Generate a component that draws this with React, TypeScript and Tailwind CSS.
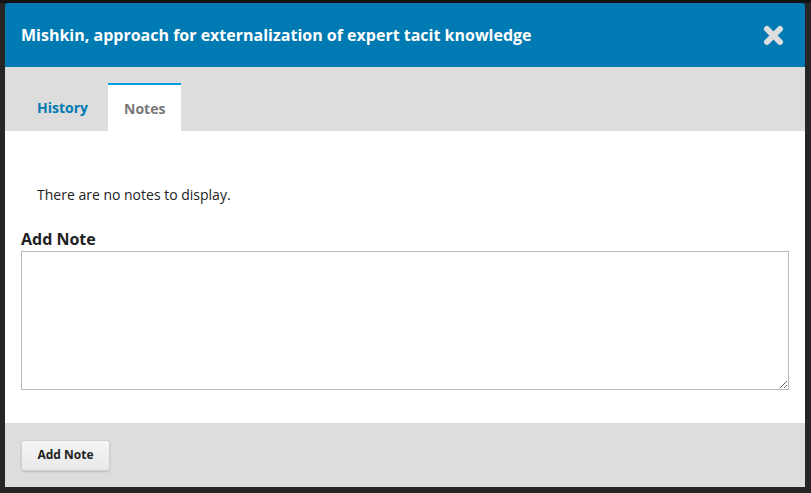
import React from "react";

export default function App() {
  const font = { fontFamily: '"Open Sans", "Noto Sans", sans-serif' };
  return (
    <div className="w-[811px] h-[493px] bg-[#262626] overflow-hidden flex flex-col" style={font}>
      <div className="h-[3px] bg-[#121212] shrink-0" />
      <div className="flex">
        <div className="w-[5px] shrink-0" />
        <div className="w-[800px] h-[484px] flex flex-col rounded-t-[3px] overflow-hidden">
          {/* Header */}
          <div className="h-[64px] bg-[#007ab2] flex items-center justify-between pl-[16px] pr-[21px] shrink-0">
            <h2 className="text-white font-bold text-[16px] leading-[22px]">
              Mishkin, approach for externalization of expert tacit knowledge
            </h2>
            <svg width="21" height="21" viewBox="0 0 21 21">
              <path d="M4 4 L17 17 M17 4 L4 17" stroke="#dddddd" strokeWidth="6" strokeLinecap="round" />
            </svg>
          </div>
          {/* Tabs */}
          <div className="h-[64px] bg-[#dddddd] flex items-end pl-[16px] gap-[4px] shrink-0">
            <div className="h-[48px] px-[16px] flex items-center text-[14px] font-bold text-[#007ab2]">
              History
            </div>
            <div className="h-[48px] px-[16px] flex items-center text-[14px] font-bold text-[#777777] bg-white border-t-2 border-[#009de5]">
              Notes
            </div>
          </div>
          {/* Content */}
          <div className="h-[292px] bg-white px-[16px] flex flex-col shrink-0">
            <p className="mt-[54px] pl-[16px] text-[14px] leading-[20px] text-[#222222]">
              There are no notes to display.
            </p>
            <h3 className="mt-[23px] text-[16px] leading-[22px] font-bold text-[#222222]">Add Note</h3>
            <textarea className="mt-px h-[139px] w-full border border-[#bbbbbb] outline-none resize-y" />
          </div>
          {/* Footer */}
          <div className="h-[64px] bg-[#dddddd] px-[16px] flex items-center shrink-0">
            <button className="h-[31px] w-[89px] rounded-[3px] border border-[#cfcfcf] bg-gradient-to-b from-[#f5f5f5] to-[#e9e9e9] shadow-[0_1px_2px_rgba(0,0,0,0.15)] text-[12px] font-bold text-[#222222]">
              Add Note
            </button>
          </div>
        </div>
        <div className="w-[6px] shrink-0" />
      </div>
    </div>
  );
}
